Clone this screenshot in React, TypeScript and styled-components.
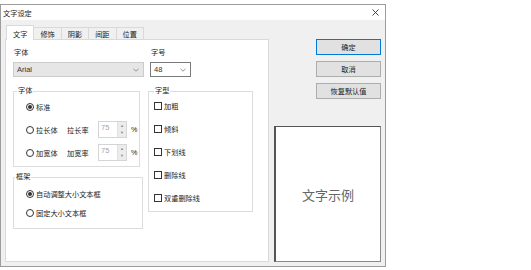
import React from "react";
import styled, { createGlobalStyle } from "styled-components";

const GlobalStyle = createGlobalStyle`
  body {
    margin: 0;
    padding-top: 4px;
    background: #fff;
    font-family: "Liberation Sans", "Noto Sans CJK SC", sans-serif;
    font-size: 7.2px;
    color: #222;
  }
  * { box-sizing: border-box; }
`;

const Window = styled.div`
  width: 386px;
  height: 263px;
  border: 1px solid #9c9c9c;
  background: #f0f0f0;
  display: flex;
  flex-direction: column;
`;

const TitleBar = styled.div`
  height: 15px;
  background: #fff;
  display: flex;
  align-items: center;
  justify-content: space-between;
  padding: 0 6px 0 2px;
`;

const Body = styled.div`
  flex: 1;
  display: flex;
  gap: 5px;
  padding: 5px 4px 4px 4px;
`;

const TabArea = styled.div`
  width: 264px;
  display: flex;
  flex-direction: column;
`;

const TabStrip = styled.div`
  height: 14px;
  display: flex;
  align-items: flex-end;
  padding-left: 1px;
`;

const Tab = styled.div<{ $active?: boolean }>`
  position: relative;
  z-index: ${(p) => (p.$active ? 1 : 0)};
  height: ${(p) => (p.$active ? "15px" : "12px")};
  margin-bottom: ${(p) => (p.$active ? "-1px" : "0")};
  margin-left: -1px;
  padding: ${(p) => (p.$active ? "1px 6px 0" : "0 6px")};
  display: flex;
  align-items: center;
  border: 1px solid #d9d9d9;
  border-bottom: none;
  background: ${(p) => (p.$active ? "#fff" : "#f0f0f0")};
  &:first-child { margin-left: 0; }
`;

const Panel = styled.div`
  flex: 1;
  background: #fff;
  border: 1px solid #d9d9d9;
  padding: 7px 7px 0 7px;
`;

const TopRow = styled.div`
  display: flex;
  gap: 6px;
`;

const Field = styled.div`
  display: flex;
  flex-direction: column;
  gap: 3px;
`;

const FieldLabel = styled.div`
  line-height: 12px;
  padding-left: 1px;
`;

const Select = styled.div<{ $w: number; $disabled?: boolean }>`
  width: ${(p) => p.$w}px;
  height: 15px;
  display: flex;
  align-items: center;
  justify-content: space-between;
  padding: 0 4px 0 3px;
  border: 1px solid ${(p) => (p.$disabled ? "#cccccc" : "#7a7a7a")};
  background: ${(p) => (p.$disabled ? "#e6e6e6" : "#fff")};
  color: #333;
  font-size: 7.5px;
`;

const GroupsRow = styled.div`
  display: flex;
  gap: 5px;
  margin-top: 14px;
`;

const LeftCol = styled.div`
  display: flex;
  flex-direction: column;
  gap: 10px;
  width: 130px;
`;

const Group = styled.div<{ $w: number; $h: number; $pad: string; $gap: number }>`
  position: relative;
  width: ${(p) => p.$w}px;
  height: ${(p) => p.$h}px;
  border: 1px solid #dcdcdc;
  padding: ${(p) => p.$pad};
  display: flex;
  flex-direction: column;
  gap: ${(p) => p.$gap}px;
`;

const Legend = styled.span<{ $left: number }>`
  position: absolute;
  top: -7px;
  left: ${(p) => p.$left}px;
  padding: 0 1px;
  background: #fff;
  line-height: 12px;
`;

const Row = styled.div<{ $h: number }>`
  height: ${(p) => p.$h}px;
  display: flex;
  align-items: center;
`;

const Option = styled.div<{ $w?: number }>`
  display: flex;
  align-items: center;
  gap: 2px;
  width: ${(p) => (p.$w ? `${p.$w}px` : "auto")};
`;

const Radio = styled.span<{ $on?: boolean }>`
  width: 8px;
  height: 8px;
  border: 1px solid #333;
  border-radius: 50%;
  display: flex;
  align-items: center;
  justify-content: center;
  &::after {
    content: "";
    width: 4px;
    height: 4px;
    border-radius: 50%;
    background: ${(p) => (p.$on ? "#333" : "transparent")};
  }
`;

const Check = styled.span`
  width: 8px;
  height: 8px;
  border: 1px solid #333;
  background: #fff;
`;

const SubLabel = styled.span`
  width: 31px;
`;

const Spin = styled.div`
  width: 29px;
  height: 17px;
  border: 1px solid #d5d5d5;
  display: flex;
`;

const SpinValue = styled.span`
  flex: 1;
  color: #a6a6a6;
  padding: 1px 0 0 2px;
  font-size: 7.5px;
`;

const SpinButtons = styled.div`
  width: 9px;
  background: #ececec;
  border-left: 1px solid #e0e0e0;
  display: flex;
  flex-direction: column;
  align-items: center;
  justify-content: space-around;
  color: #8a8a8a;
  font-size: 4px;
  line-height: 4px;
`;

const Percent = styled.span`
  margin-left: 4px;
`;

const Side = styled.div`
  width: 107px;
  display: flex;
  flex-direction: column;
  align-items: flex-end;
`;

const ButtonStack = styled.div`
  margin-top: 14px;
  display: flex;
  flex-direction: column;
  gap: 6px;
`;

const Button = styled.div<{ $primary?: boolean }>`
  width: 65px;
  height: 16px;
  display: flex;
  align-items: center;
  justify-content: center;
  background: #e1e1e1;
  border: 1px solid ${(p) => (p.$primary ? "#0078d7" : "#adadad")};
`;

const Preview = styled.div`
  margin-top: auto;
  width: 107px;
  height: 136px;
  background: #fff;
  border: 1px solid #8a8a8a;
  border-top-color: #555;
  border-left: 2px solid #555;
  display: flex;
  align-items: center;
  justify-content: center;
  font-size: 13px;
  color: #666;
`;

const Chevron = () => (
  <svg width="6" height="4" viewBox="0 0 6 4">
    <path d="M0.5 0.8 L3 3.2 L5.5 0.8" fill="none" stroke="#777" strokeWidth="0.8" />
  </svg>
);

const CloseIcon = () => (
  <svg width="7" height="7" viewBox="0 0 7 7">
    <path d="M0.5 0.5 L6.5 6.5 M6.5 0.5 L0.5 6.5" stroke="#333" strokeWidth="0.9" />
  </svg>
);

const tabs = ["文字", "修饰", "阴影", "间距", "位置"];
const styles = ["加粗", "倾斜", "下划线", "删除线", "双重删除线"];

function SpinBox() {
  return (
    <Spin>
      <SpinValue>75</SpinValue>
      <SpinButtons>
        <span>▲</span>
        <span>▼</span>
      </SpinButtons>
    </Spin>
  );
}

export default function App() {
  return (
    <>
      <GlobalStyle />
      <Window>
        <TitleBar>
          <span>文字设定</span>
          <CloseIcon />
        </TitleBar>
        <Body>
          <TabArea>
            <TabStrip>
              {tabs.map((t, i) => (
                <Tab key={t} $active={i === 0}>{t}</Tab>
              ))}
            </TabStrip>
            <Panel>
              <TopRow>
                <Field>
                  <FieldLabel>字体</FieldLabel>
                  <Select $w={131} $disabled>
                    <span>Arial</span>
                    <Chevron />
                  </Select>
                </Field>
                <Field>
                  <FieldLabel>字号</FieldLabel>
                  <Select $w={41}>
                    <span>48</span>
                    <Chevron />
                  </Select>
                </Field>
              </TopRow>
              <GroupsRow>
                <LeftCol>
                  <Group $w={127} $h={76} $pad="6px 0 0 12px" $gap={6}>
                    <Legend $left={3}>字体</Legend>
                    <Row $h={17}>
                      <Option><Radio $on />标准</Option>
                    </Row>
                    <Row $h={17}>
                      <Option $w={41}><Radio />拉长体</Option>
                      <SubLabel>拉长率</SubLabel>
                      <SpinBox />
                      <Percent>%</Percent>
                    </Row>
                    <Row $h={17}>
                      <Option $w={41}><Radio />加宽体</Option>
                      <SubLabel>加宽率</SubLabel>
                      <SpinBox />
                      <Percent>%</Percent>
                    </Row>
                  </Group>
                  <Group $w={130} $h={52} $pad="10px 0 0 12px" $gap={7}>
                    <Legend $left={1}>框架</Legend>
                    <Row $h={12}>
                      <Option><Radio $on />自动调整大小文本框</Option>
                    </Row>
                    <Row $h={12}>
                      <Option><Radio />固定大小文本框</Option>
                    </Row>
                  </Group>
                </LeftCol>
                <Group $w={105} $h={121} $pad="8px 0 0 5px" $gap={11}>
                  <Legend $left={5}>字型</Legend>
                  {styles.map((s) => (
                    <Row key={s} $h={12}>
                      <Option><Check />{s}</Option>
                    </Row>
                  ))}
                </Group>
              </GroupsRow>
            </Panel>
          </TabArea>
          <Side>
            <ButtonStack>
              <Button $primary>确定</Button>
              <Button>取消</Button>
              <Button>恢复默认值</Button>
            </ButtonStack>
            <Preview>文字示例</Preview>
          </Side>
        </Body>
      </Window>
    </>
  );
}
